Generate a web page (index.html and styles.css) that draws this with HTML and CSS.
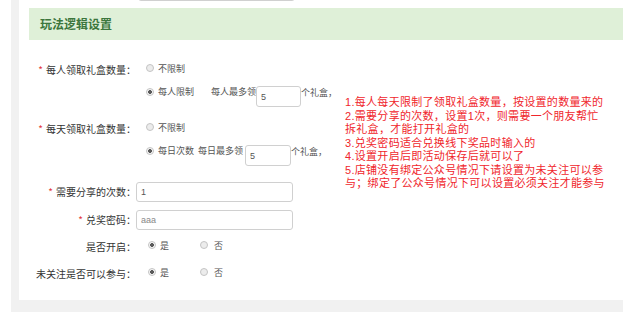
FILE: index.html
```html
<!DOCTYPE html>
<html>
<head>
  <meta charset="utf-8">
  <title>玩法逻辑设置</title>
  <link rel="stylesheet" href="styles.css">
</head>
<body>
  <div class="page">
    <div class="card">
      <!-- 上一项（已滚出视图） -->
      <div class="prev-row">
        <input class="text-input prev-input" type="text">
      </div>

      <div class="panel-heading">玩法逻辑设置</div>

      <div class="panel-body">
        <div class="form">
          <div class="form-group group-radio">
            <label class="control-label"><span class="star">*</span>每人领取礼盒数量：</label>
            <div class="controls">
              <div class="line"><span class="radio"></span><span class="opt">不限制</span></div>
              <div class="line line-input">
                <span class="radio on"></span><span class="opt">每人限制</span>
                <span class="hint hint-wide">每人最多领</span>
                <input class="num-input" type="text" value="5">
                <span class="unit">个礼盒，</span>
              </div>
            </div>
          </div>

          <div class="form-group group-radio group-day">
            <label class="control-label"><span class="star">*</span>每天领取礼盒数量：</label>
            <div class="controls">
              <div class="line"><span class="radio"></span><span class="opt">不限制</span></div>
              <div class="line line-input">
                <span class="radio on"></span><span class="opt">每日次数</span>
                <span class="hint">每日最多领</span>
                <input class="num-input num-day" type="text" value="5">
                <span class="unit">个礼盒，</span>
              </div>
            </div>
          </div>

          <div class="form-group group-text group-share">
            <label class="control-label"><span class="star">*</span>需要分享的次数：</label>
            <input class="text-input" type="text" value="1">
          </div>

          <div class="form-group group-text group-pwd">
            <label class="control-label"><span class="star">*</span>兑奖密码：</label>
            <input class="text-input muted" type="text" value="aaa">
          </div>

          <div class="form-group group-yesno group-open">
            <label class="control-label">是否开启：</label>
            <div class="line">
              <span class="radio on"></span><span class="opt">是</span>
              <span class="radio radio-no"></span><span class="opt opt-no">否</span>
            </div>
          </div>

          <div class="form-group group-yesno group-follow">
            <label class="control-label">未关注是否可以参与：</label>
            <div class="line">
              <span class="radio on"></span><span class="opt">是</span>
              <span class="radio radio-no"></span><span class="opt opt-no">否</span>
            </div>
          </div>
        </div>

        <div class="note">
          <p>1.每人每天限制了领取礼盒数量，按设置的数量来的</p>
          <p>2.需要分享的次数，设置1次，则需要一个朋友帮忙</p>
          <p>拆礼盒，才能打开礼盒的</p>
          <p>3.兑奖密码适合兑换线下奖品时输入的</p>
          <p>4.设置开启后即活动保存后就可以了</p>
          <p>5.店铺没有绑定公众号情况下请设置为未关注可以参</p>
          <p>与；绑定了公众号情况下可以设置必须关注才能参与</p>
        </div>
      </div>
    </div>
  </div>
</body>
</html>
```

FILE: styles.css
```css
* {
  box-sizing: border-box;
  font-family: "Noto Sans CJK SC", "Noto Sans", sans-serif;
}

html, body {
  margin: 0;
  height: 100%;
  overflow: hidden;
  background-color: #fff;
}

.page {
  height: 100%;
  margin-left: 11px;
  padding-left: 8px;
  background-color: #f1f1f1;
}

.card {
  background-color: #fff;
  padding-bottom: 20px;
}

.prev-row {
  height: 1px;
  display: flex;
  align-items: flex-end;
  padding-left: 119px;
}
.prev-input {
  width: 154px;
  height: 24px;
  flex-shrink: 0;
  border-color: #c8c8c8;
}

.panel-heading {
  margin: 7px 0 0 10px;
  height: 32px;
  line-height: 32px;
  padding-left: 11px;
  background-color: #dff0d8;
  color: #3c763d;
  font-size: 12px;
  font-weight: 700;
}

.panel-body {
  display: flex;
  align-items: flex-start;
  padding-top: 22px;
}

.form {
  width: 326px;
  flex-shrink: 0;
}

.form-group {
  display: flex;
  align-items: flex-start;
}

.control-label {
  width: 117px;
  flex-shrink: 0;
  text-align: right;
  font-size: 10px;
  line-height: 12px;
  color: #333;
  white-space: nowrap;
}
.star {
  color: #e4393c;
  margin-right: 3px;
}

.group-radio .control-label,
.group-yesno .control-label {
  padding-top: 2px;
}

.group-day { margin-top: 14px; }
.group-share { margin-top: 16px; }
.group-pwd { margin-top: 8px; }
.group-open { margin-top: 9px; }
.group-follow { margin-top: 13px; }

.group-text {
  align-items: center;
}
.group-text .control-label {
  line-height: 20px;
}

.line {
  display: flex;
  align-items: center;
  height: 12px;
  font-size: 9px;
  color: #555;
  white-space: nowrap;
}
.line + .line {
  margin-top: 12px;
}
.line-input {
  height: 21px;
  align-items: flex-start;
}
.line-input span {
  line-height: 12px;
}
.line-input .radio {
  margin-top: 2px;
}

.radio {
  width: 8px;
  height: 8px;
  margin-left: 10px;
  border-radius: 50%;
  border: 1px solid #c4c4c4;
  background-color: #ececec;
  flex-shrink: 0;
}
.radio.on {
  background: radial-gradient(circle, #5a5a5a 0 1.6px, #f6f6f6 2.2px);
}
.opt {
  margin-left: 4px;
}

.group-yesno .radio {
  margin-left: 12px;
}
.group-yesno .radio-no {
  margin-left: 31px;
}
.group-yesno .opt-no {
  margin-left: 6px;
}

.hint {
  margin-left: 4px;
}
.hint-wide {
  margin-left: 17px;
}
.unit {
  margin-top: 1px;
}

.text-input, .num-input {
  border: 1px solid #d0d0d0;
  border-radius: 3px;
  background-color: #fff;
  padding: 0 4px;
  font-family: "Liberation Sans", Arial, sans-serif;
  font-size: 9px;
  color: #555;
  outline: none;
}
.text-input {
  width: 157px;
  height: 20px;
}
.num-input {
  width: 45px;
  height: 21px;
}
.num-day {
  margin-left: 2px;
  width: 46px;
}
.muted {
  color: #888;
}

.note {
  margin-top: 34px;
  font-size: 11px;
  letter-spacing: 0.3px;
  color: #f0262c;
  white-space: nowrap;
}
.note p {
  margin: 0;
  height: 13.5px;
  line-height: 13.5px;
  font-family: "Liberation Sans", "Noto Sans CJK SC", sans-serif;
}
```
